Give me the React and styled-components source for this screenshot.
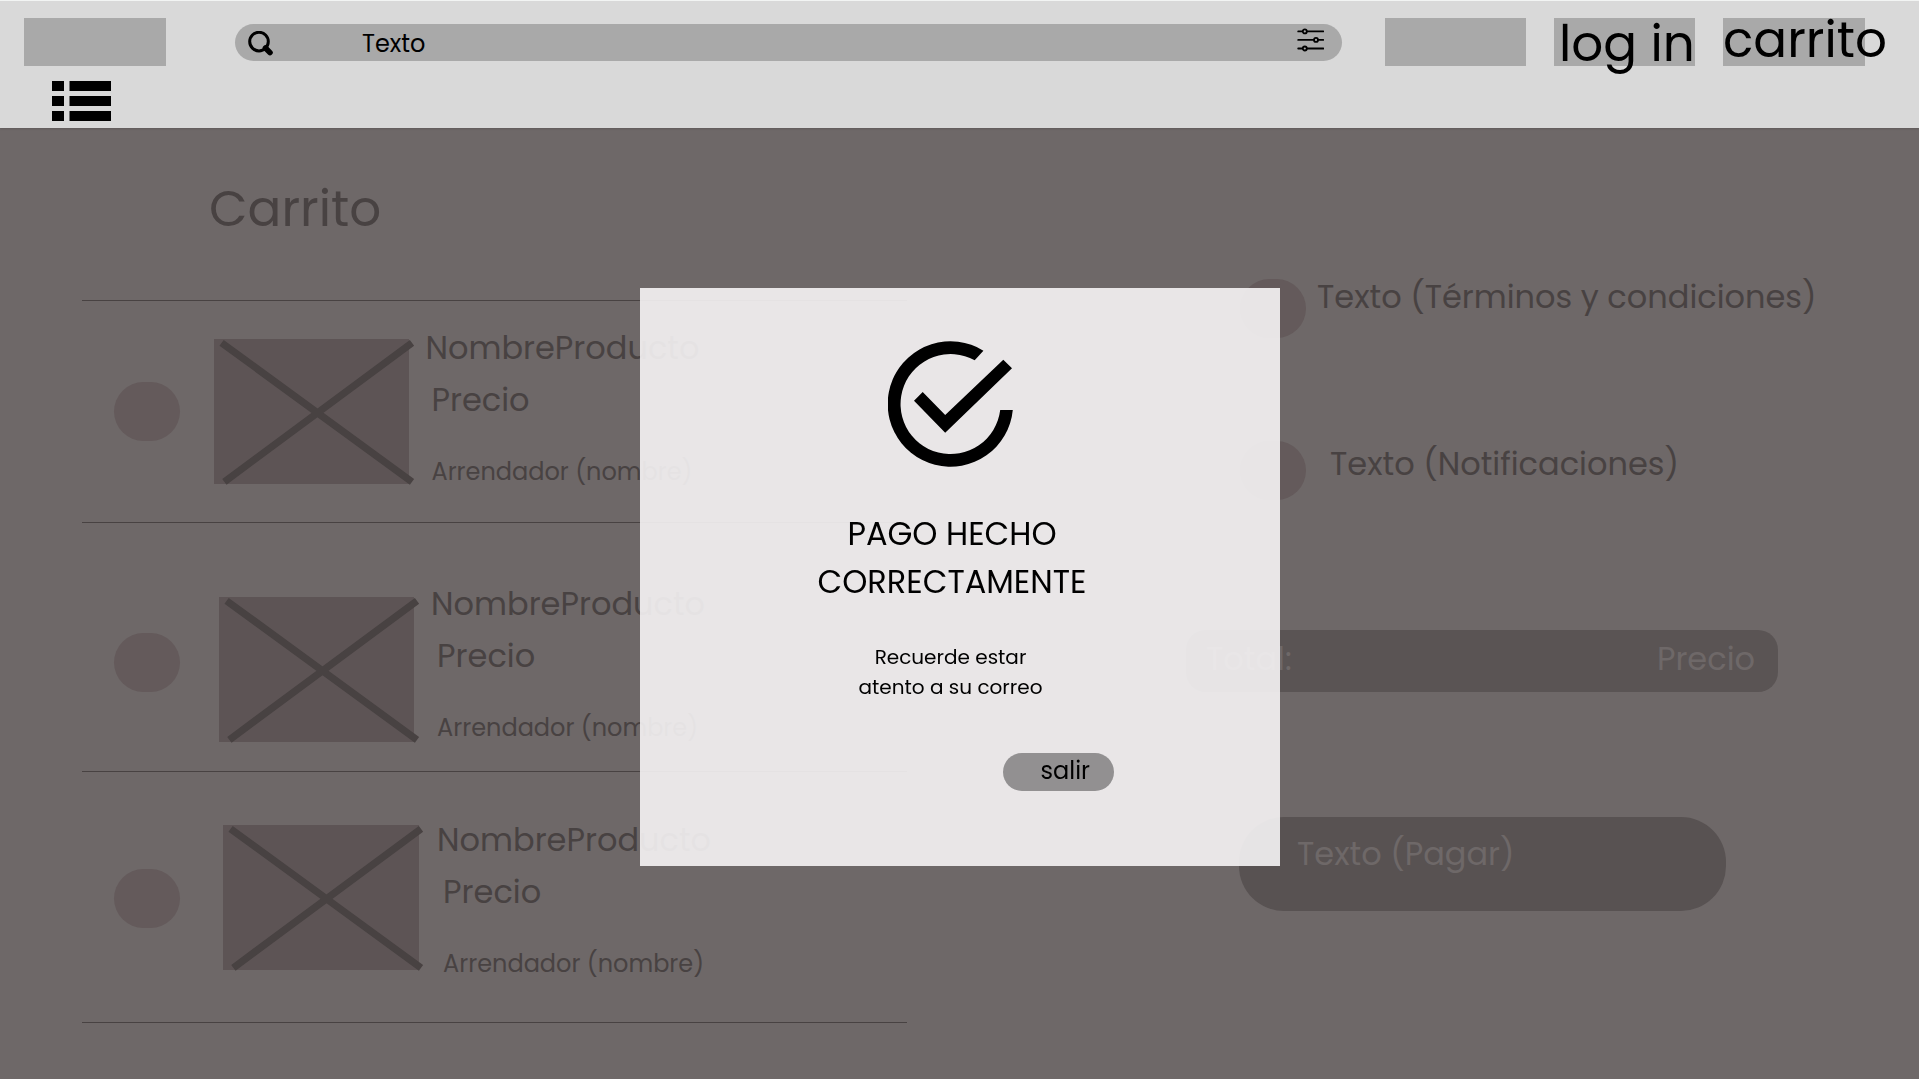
import React from "react";
import styled, { createGlobalStyle } from "styled-components";

const GlobalStyle = createGlobalStyle`
  * { box-sizing: border-box; }
  body {
    margin: 0;
    overflow: hidden;
    background: #6e6868;
    color: #000;
    font-family: Poppins, Inter, "Liberation Sans", sans-serif;
  }
`;

const Page = styled.div`
  width: 1919px;
  height: 1079px;
  overflow: hidden;
`;

const Label = styled.span`
  display: block;
  white-space: nowrap;
  font-size: ${(p) => p.$size}px;
  line-height: ${(p) => p.$line}px;
  margin: ${(p) => p.$margin || "0"};
`;

/* ---------- header ---------- */

const Header = styled.header`
  height: 128px;
  background: #d9d9d9;
  border-top: 1px solid #f2f4f3;
  box-shadow: 0 1px 2px #00000022;
`;

const HeaderBar = styled.div`
  display: flex;
  align-items: flex-start;
  height: 80px;
  padding: 17px 0 0 24px;
`;

const Slot = styled.div`
  flex: none;
  width: ${(p) => p.$width || 141}px;
  height: 48px;
  margin-left: ${(p) => p.$gap || 0}px;
  background: #a9a9a9;
`;

const Search = styled.div`
  display: flex;
  align-items: flex-start;
  width: 1107px;
  height: 37px;
  margin: 6px 0 0 69px;
  padding: 0 18px 0 13px;
  border-radius: 18.5px;
  background: #a9a9a9;
`;

const SearchSvg = styled.svg`
  margin-top: 7px;
`;

const FilterSvg = styled.svg`
  margin: 4px 0 0 auto;
`;

const MenuSvg = styled.svg`
  display: block;
  margin-left: 52px;
`;

/* ---------- content ---------- */

const Main = styled.main`
  display: flex;
  height: 951px;
  padding-left: 82px;
  color: #484242;
`;

const Cart = styled.section`
  width: 825px;
`;

const CartHead = styled.div`
  height: 173px;
  padding: 45px 0 0 127px;
  border-bottom: 1px solid #484242;
`;

const Row = styled.article`
  display: flex;
  align-items: flex-start;
  height: ${(p) => p.$height}px;
  padding-left: 32px;
  border-bottom: 1px solid #484242;
`;

const Dot = styled.div`
  flex: none;
  width: 66px;
  height: 59px;
  margin-top: ${(p) => p.$top}px;
  border-radius: 29.5px;
  background: #645a5b;
`;

const Thumb = styled.div`
  flex: none;
  width: 195.5px;
  height: 145.3px;
  margin: ${(p) => p.$top}px 0 0 ${(p) => p.$left}px;
  background: #5d5455;

  svg {
    display: block;
    overflow: visible;
  }
`;

const Info = styled.div`
  margin: ${(p) => p.$top}px 0 0 ${(p) => p.$left}px;
`;

const Summary = styled.section`
  width: 680px;
  margin-left: 279px;
`;

const Option = styled.div`
  display: flex;
  align-items: flex-start;
  padding-left: 54px;
  height: ${(p) => p.$height}px;
  margin-top: ${(p) => p.$top}px;
`;

const Total = styled.div`
  display: flex;
  justify-content: space-between;
  width: 592px;
  height: 62px;
  margin-top: 130px;
  padding: 4.5px 23px 0 20px;
  border-radius: 20px;
  background: #5a5454;
  color: #6e6868;
`;

const PayButton = styled.button`
  display: block;
  width: 487px;
  height: 94.5px;
  margin: 124.5px 0 0 53px;
  padding: 0 0 32px 58px;
  border: 0;
  border-radius: 45px;
  background: #585252;
  color: #6e6868;
  font: inherit;
  text-align: left;

  ${Label} { margin-top: 13px; }
`;

/* ---------- modal ---------- */

const Modal = styled.div`
  position: fixed;
  left: 640px;
  top: 288px;
  display: flex;
  flex-direction: column;
  align-items: center;
  width: 640px;
  height: 578px;
  padding: 53px 19px 0 0;
  background: rgba(246, 244, 245, 0.9);
`;

const Title = styled.div`
  display: flex;
  flex-direction: column;
  align-items: center;
  margin: 43px 0 0 3px;
`;

const Note = styled.div`
  display: flex;
  flex-direction: column;
  align-items: center;
  margin-top: 36px;
`;

const ExitButton = styled.button`
  align-self: flex-end;
  width: 111px;
  height: 38px;
  margin: 50.5px 147px 0 0;
  padding: 0 0 2px 37.5px;
  border: 0;
  border-radius: 19px;
  background: #929091;
  color: #000;
  font: inherit;
  text-align: left;
`;

const products = [
  { height: 222, dot: 81, thumb: 37.6, thumbLeft: 33.8, text: 23, textLeft: 16.2 },
  { height: 249, dot: 110, thumb: 74, thumbLeft: 38.8, text: 57, textLeft: 16.8 },
  { height: 251, dot: 97, thumb: 53, thumbLeft: 43.3, text: 44, textLeft: 18.3 },
];

function CrossedBox() {
  return (
    <svg width="195.5" height="145.3" stroke="#484242" strokeWidth="7.2">
      <path d="M7.6 3.8 L198 142.8 M10.4 142.8 L198 3.8" />
    </svg>
  );
}

function Product({ item }) {
  return (
    <Row $height={item.height}>
      <Dot $top={item.dot} />
      <Thumb $top={item.thumb} $left={item.thumbLeft}>
        <CrossedBox />
      </Thumb>
      <Info $top={item.text} $left={item.textLeft}>
        <Label $size={32} $line={48}>NombreProducto</Label>
        <Label $size={32} $line={48} $margin="4px 0 0 6px">Precio</Label>
        <Label $size={24} $line={36} $margin="30px 0 0 6px">Arrendador (nombre)</Label>
      </Info>
    </Row>
  );
}

export default function App() {
  return (
    <Page>
      <GlobalStyle />
      <Header>
        <HeaderBar>
          <Slot $width={142} />
          <Search>
            <SearchSvg width="25" height="25" fill="none" stroke="#000">
              <circle cx="11" cy="10.6" r="9.3" strokeWidth="3" />
              <path d="M17.5 17 L22 21.6" strokeWidth="5.6" strokeLinecap="round" />
            </SearchSvg>
            <Label $size={24} $line={36} $margin="1.6px 0 0 89px">Texto</Label>
            <FilterSvg width="27" height="24" viewBox="0 0 27 24" fill="#a9a9a9" stroke="#000" strokeWidth="1.8">
              <path d="M1.2 3.4H26.3M1.2 11.9H26.3M1.2 20.5H26.3" strokeLinecap="round" />
              <circle cx="7.8" cy="3.4" r="2" />
              <circle cx="19" cy="11.9" r="2" />
              <circle cx="7.8" cy="20.5" r="2" />
            </FilterSvg>
          </Search>
          <Slot $gap={43} />
          <Slot $gap={28}>
            <Label $size={50} $line={72} $margin="-10.5px 0 0 5px">log in</Label>
          </Slot>
          <Slot $gap={28} $width={142}>
            <Label $size={50} $line={72} $margin="-14.5px 0 0 0">carrito</Label>
          </Slot>
        </HeaderBar>
        <MenuSvg width="60" height="40">
          <path d="M0 0h12v10H0zM17.5 0H59v10H17.5zM0 15h12v10H0zM17.5 15H59v10H17.5zM0 30h12v10H0zM17.5 30H59v10H17.5z" />
        </MenuSvg>
      </Header>

      <Main>
        <Cart>
          <CartHead>
            <Label $size={50} $line={72}>Carrito</Label>
          </CartHead>
          {products.map((item, i) => (
            <Product key={i} item={item} />
          ))}
        </Cart>

        <Summary>
          <Option $top={144} $height={162}>
            <Dot $top={7} />
            <Label $size={32} $line={48} $margin="0.5px 0 0 11px">Texto (Términos y condiciones)</Label>
          </Option>
          <Option $top={0} $height={66}>
            <Dot $top={7} />
            <Label $size={32} $line={48} $margin="5.5px 0 0 24px">Texto (Notificaciones)</Label>
          </Option>
          <Total>
            <Label $size={32} $line={48}>Total:</Label>
            <Label $size={32} $line={48}>Precio</Label>
          </Total>
          <PayButton>
            <Label $size={32} $line={48}>Texto (Pagar)</Label>
          </PayButton>
        </Summary>
      </Main>

      <Modal>
        <svg width="125" height="126" viewBox="888 341 125 126">
          <path d="M983.4 350.7 A62.7 62.7 0 1 0 1012.8 410 H1000.2 A50 50 0 1 1 974.7 360.3 Z" />
          <path d="M1003.3 359.7 L1012 368.3 L945.2 432.7 L914 400.7 L922.7 392 L945.2 415 Z" />
        </svg>
        <Title>
          <Label $size={32} $line={48}>PAGO HECHO</Label>
          <Label $size={32} $line={48}>CORRECTAMENTE</Label>
        </Title>
        <Note>
          <Label $size={20} $line={30}>Recuerde estar</Label>
          <Label $size={20} $line={30}>atento a su correo</Label>
        </Note>
        <ExitButton>
          <Label $size={24} $line={36}>salir</Label>
        </ExitButton>
      </Modal>
    </Page>
  );
}
